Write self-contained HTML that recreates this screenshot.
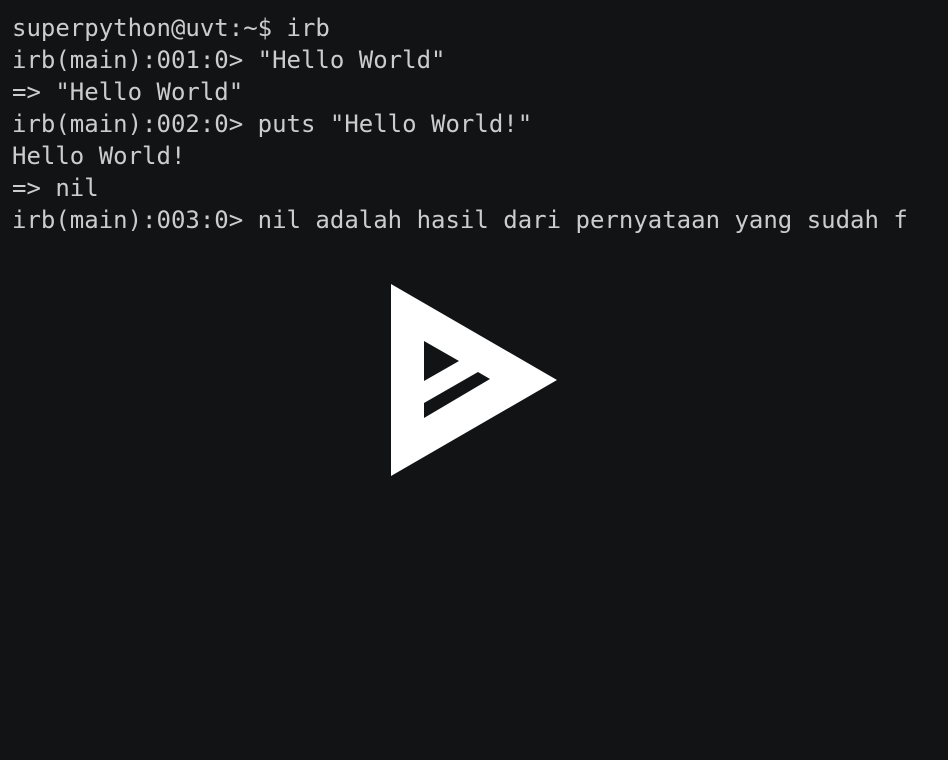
<!DOCTYPE html>
<html><head><style>
html,body{margin:0;padding:0;background:#121314;width:948px;height:760px;overflow:hidden}
pre{position:absolute;left:12px;top:12px;margin:0;font-family:"DejaVu Sans Mono","Liberation Mono",monospace;font-size:24px;line-height:32px;color:#cccccc}
svg{position:absolute;left:0;top:0}
</style></head><body>
<pre>superpython@uvt:~$ irb
irb(main):001:0&gt; "Hello World"
=&gt; "Hello World"
irb(main):002:0&gt; puts "Hello World!"
Hello World!
=&gt; nil
irb(main):003:0&gt; nil adalah hasil dari pernyataan yang sudah f</pre>
<svg width="948" height="760"><path fill="#fff" fill-rule="evenodd" d="M391 284L557 380L391 476Z M424 341L459 361L424 381Z M424 403L478 372L490 379L424 418Z"/></svg>
</body></html>
